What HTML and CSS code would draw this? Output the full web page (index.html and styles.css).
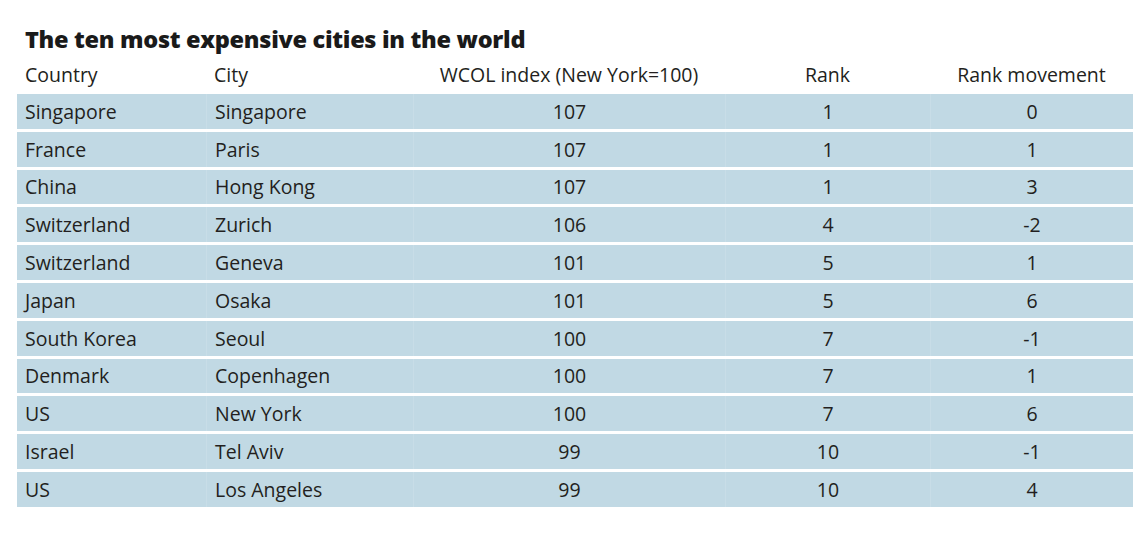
FILE: index.html
```html
<!DOCTYPE html>
<html>
<head>
<meta charset="utf-8">
<link rel="stylesheet" href="styles.css">
</head>
<body>
<div class="chart">
  <h1 class="title">The ten most expensive cities in the world</h1>
  <table class="data">
    <colgroup>
      <col class="c-country"><col class="c-city"><col class="c-index"><col class="c-rank"><col class="c-move">
    </colgroup>
    <thead>
      <tr><th class="left">Country</th><th class="left">City</th><th>WCOL index (New York=100)</th><th>Rank</th><th>Rank movement</th></tr>
    </thead>
    <tbody>
      <tr><td class="left">Singapore</td><td class="left">Singapore</td><td>107</td><td>1</td><td>0</td></tr>
      <tr><td class="left">France</td><td class="left">Paris</td><td>107</td><td>1</td><td>1</td></tr>
      <tr><td class="left">China</td><td class="left">Hong Kong</td><td>107</td><td>1</td><td>3</td></tr>
      <tr><td class="left">Switzerland</td><td class="left">Zurich</td><td>106</td><td>4</td><td>-2</td></tr>
      <tr><td class="left">Switzerland</td><td class="left">Geneva</td><td>101</td><td>5</td><td>1</td></tr>
      <tr><td class="left">Japan</td><td class="left">Osaka</td><td>101</td><td>5</td><td>6</td></tr>
      <tr><td class="left">South Korea</td><td class="left">Seoul</td><td>100</td><td>7</td><td>-1</td></tr>
      <tr><td class="left">Denmark</td><td class="left">Copenhagen</td><td>100</td><td>7</td><td>1</td></tr>
      <tr><td class="left">US</td><td class="left">New York</td><td>100</td><td>7</td><td>6</td></tr>
      <tr><td class="left">Israel</td><td class="left">Tel Aviv</td><td>99</td><td>10</td><td>-1</td></tr>
      <tr><td class="left">US</td><td class="left">Los Angeles</td><td>99</td><td>10</td><td>4</td></tr>
    </tbody>
  </table>
</div>
</body>
</html>
```
FILE: styles.css
```css
html, body {
  margin: 0;
  padding: 0;
  background: #ffffff;
}
.chart {
  padding: 25px 0 0 17px;
  font-family: "Open Sans", "Liberation Sans", sans-serif;
  color: #231f20;
}
.title {
  margin: 0 0 0 8px;
  font-size: 23.5px;
  line-height: 28px;
  font-weight: 800;
  color: #1a1a1a;
  letter-spacing: -0.3px;
}
.data {
  border-collapse: separate;
  border-spacing: 0 3px;
  width: 1116px;
  table-layout: fixed;
  margin-top: 3px;
  font-size: 19.5px;
}
.c-country { width: 189px; }
.c-city { width: 207px; }
.c-index { width: 312px; }
.c-rank { width: 205px; }
.c-move { width: 203px; }
th, td {
  padding: 0 8px;
  text-align: center;
  font-weight: 400;
  white-space: nowrap;
}
th {
  height: 31px;
  vertical-align: middle;
  padding-bottom: 1px;
}
td {
  height: 34.8px;
  background: #c1d9e4;
  vertical-align: middle;
  border-left: 1px solid #c8dde7;
}
td:first-child { border-left: none; }
.left { text-align: left; }
```
